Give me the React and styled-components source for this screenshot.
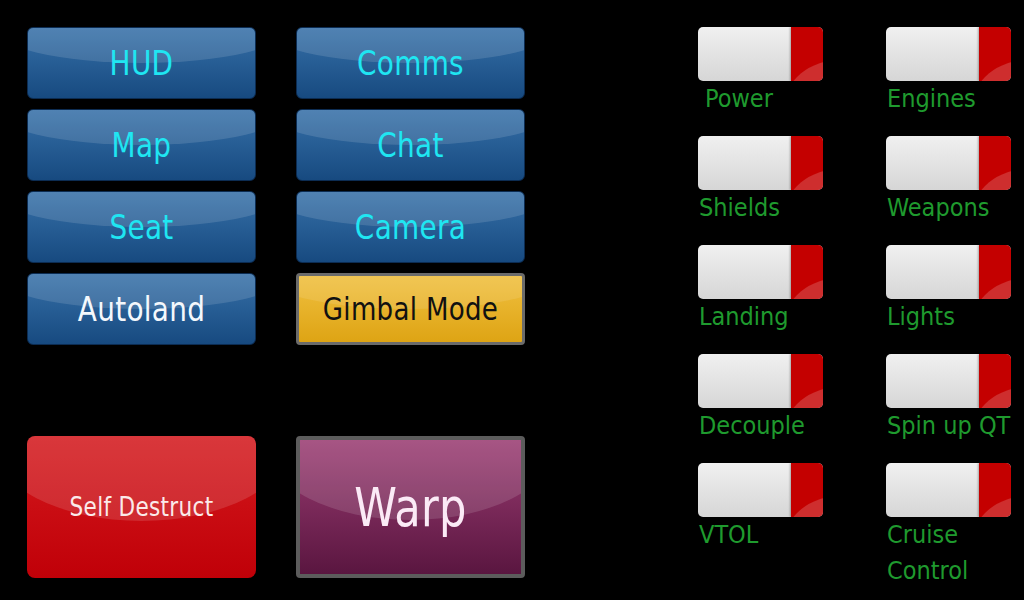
import styled, { createGlobalStyle, css } from "styled-components";

const GlobalStyle = createGlobalStyle`
  html, body {
    margin: 0;
    padding: 0;
    background: #000;
    width: 1024px;
    height: 600px;
    overflow: hidden;
  }
  body {
    font-family: "DejaVu Sans Condensed", "DejaVu Sans", sans-serif;
  }
`;

const buttons = [
  { label: "HUD", tone: "blue" },
  { label: "Comms", tone: "blue" },
  { label: "Map", tone: "blue" },
  { label: "Chat", tone: "blue" },
  { label: "Seat", tone: "blue" },
  { label: "Camera", tone: "blue" },
  { label: "Autoland", tone: "blue", white: true },
  { label: "Gimbal Mode", tone: "gold" },
];

const toggles = [
  "Power",
  "Engines",
  "Shields",
  "Weapons",
  "Landing",
  "Lights",
  "Decouple",
  "Spin up QT",
  "VTOL",
  "Cruise Control",
];

const tones = {
  blue: css`
    background: linear-gradient(#3670a8, #174a80);
    border: 1px solid #0c2c52;
    border-radius: 6px;
    color: #1fe6f2;
    font-size: 31px;
  `,
  gold: css`
    background: linear-gradient(#f0c040, #dea414);
    border: 3px solid #6b6b6b;
    border-radius: 4px;
    color: #111;
    font-size: 29px;
  `,
  red: css`
    background: linear-gradient(#d41a1e, #c00008);
    border: none;
    border-radius: 8px;
    color: #fbeaea;
    font-size: 24px;
  `,
  warp: css`
    background: linear-gradient(#9a3c72, #5a1640);
    border: 4px solid #5c5c5c;
    border-radius: 4px;
    color: #fbeaf6;
    font-size: 48px;
  `,
};

export default function App() {
  return (
    <>
      <GlobalStyle />
      <Page>
        <Left>
          <ButtonGrid>
            {buttons.map((b) => (
              <Button key={b.label} tone={b.tone} $white={b.white}>
                <Label>{b.label}</Label>
              </Button>
            ))}
          </ButtonGrid>
          <BigRow>
            <Button tone="red" $big>
              <Label>Self Destruct</Label>
            </Button>
            <Button tone="warp" $big>
              <Label>Warp</Label>
            </Button>
          </BigRow>
        </Left>
        <ToggleGrid>
          {toggles.map((t) => (
            <ToggleItem key={t}>
              <Toggle>
                <ToggleKnob />
              </Toggle>
              <ToggleLabel $indent={t === "Power"}>{t}</ToggleLabel>
            </ToggleItem>
          ))}
        </ToggleGrid>
      </Page>
    </>
  );
}

const Page = styled.div`
  display: flex;
  padding: 27px 0 0 27px;
  height: 600px;
  box-sizing: border-box;
`;

const Left = styled.div`
  display: flex;
  flex-direction: column;
  width: 497px;
`;

const ButtonGrid = styled.div`
  display: grid;
  grid-template-columns: 229px 229px;
  grid-auto-rows: 72px;
  column-gap: 40px;
  row-gap: 10px;
`;

const BigRow = styled.div`
  display: grid;
  grid-template-columns: 229px 229px;
  grid-template-rows: 142px;
  column-gap: 40px;
  margin-top: 91px;
`;

const Button = styled.button`
  position: relative;
  overflow: hidden;
  box-sizing: border-box;
  display: flex;
  align-items: center;
  justify-content: center;
  padding: 0;
  font-family: inherit;
  cursor: pointer;
  ${(p) => tones[p.tone]}
  ${(p) => p.$white && "color: #f4f8fc;"}

  &::before {
    content: "";
    position: absolute;
    left: -15%;
    width: 130%;
    top: -50%;
    height: ${(p) => (p.$big ? "110%" : "100%")};
    border-radius: 50%;
    background: rgba(255, 255, 255, ${(p) => (p.tone === "gold" ? 0.1 : 0.13)});
    pointer-events: none;
  }
`;

const Label = styled.span`
  position: relative;
  display: inline-block;
  letter-spacing: 0.3px;
  transform: scaleY(1.1);
`;

const ToggleGrid = styled.div`
  margin-left: 174px;
  display: grid;
  grid-template-columns: 188px 136px;
  grid-auto-rows: 109px;
  align-content: start;
`;

const ToggleItem = styled.div`
  display: flex;
  flex-direction: column;
`;

const Toggle = styled.div`
  position: relative;
  flex-shrink: 0;
  width: 125px;
  height: 54px;
  border-radius: 5px;
  background: linear-gradient(#f0f0f0, #d6d6d6);
  overflow: hidden;
`;

const ToggleKnob = styled.div`
  position: absolute;
  top: 0;
  right: 0;
  bottom: 0;
  width: 32px;
  background: #c40000;
  box-shadow: -1px 0 2px rgba(0, 0, 0, 0.3);
  overflow: hidden;

  &::after {
    content: "";
    position: absolute;
    left: -6px;
    top: 62%;
    width: 110px;
    height: 90px;
    border-radius: 50%;
    background: rgba(255, 255, 255, 0.18);
  }
`;

const ToggleLabel = styled.div`
  color: #1f9a2e;
  font-size: 25px;
  line-height: 36px;
  white-space: nowrap;
  width: 136px;
  white-space: normal;
  padding-left: ${(p) => (p.$indent ? "7px" : "1px")};
`;
